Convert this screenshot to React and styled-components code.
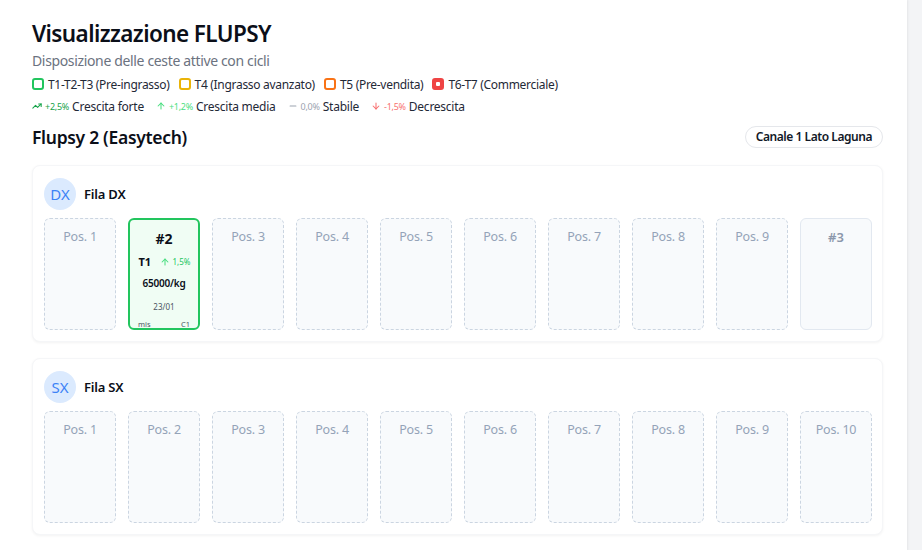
import styled, { createGlobalStyle } from 'styled-components'
import { TrendingUp, ArrowUp, ArrowDown, Minus } from 'lucide-react'

const Global = createGlobalStyle`
    body {
        margin: 0;
        background: #f3f4f6;
        font-family: "Noto Sans", "Open Sans", sans-serif;
        color: #111827;
    }
`

const legend = [
    { label: 'T1-T2-T3 (Pre-ingrasso)', color: '#22c55e' },
    { label: 'T4 (Ingrasso avanzato)', color: '#eab308' },
    { label: 'T5 (Pre-vendita)', color: '#f97316' },
    { label: 'T6-T7 (Commerciale)', color: '#ef4444', filled: true },
]

const trends = [
    { Icon: TrendingUp, value: '+2,5%', label: 'Crescita forte', color: '#16a34a' },
    { Icon: ArrowUp, value: '+1,2%', label: 'Crescita media', color: '#4ade80' },
    { Icon: Minus, value: '0,0%', label: 'Stabile', color: '#9ca3af' },
    { Icon: ArrowDown, value: '-1,5%', label: 'Decrescita', color: '#f87171' },
]

const dxSlots = [
    { pos: 1 },
    { pos: 2, basket: { num: 2, size: 'T1', trend: '1,5%', density: '65000/kg', date: '23/01', cycle: 'C1' } },
    { pos: 3 }, { pos: 4 }, { pos: 5 }, { pos: 6 }, { pos: 7 }, { pos: 8 }, { pos: 9 },
    { pos: 10, idle: 3 },
]
const sxSlots = Array.from({ length: 10 }, (_, i) => ({ pos: i + 1 }))

function Slot({ slot }) {
    if (slot.basket) {
        const b = slot.basket
        return (
            <ActiveCard>
                <CardNum>#{b.num}</CardNum>
                <SizeRow>
                    <SizeTag>{b.size}</SizeTag>
                    <Growth><ArrowUp size={10} strokeWidth={2.5} />{b.trend}</Growth>
                </SizeRow>
                <Density>{b.density}</Density>
                <DateText>{b.date}</DateText>
                <CardFoot><span>mis</span><span>{b.cycle}</span></CardFoot>
            </ActiveCard>
        )
    }
    if (slot.idle) {
        return <IdleCard><IdleNum>#{slot.idle}</IdleNum></IdleCard>
    }
    return <EmptyCard><PosLabel>Pos. {slot.pos}</PosLabel></EmptyCard>
}

function Row({ code, name, slots }) {
    return (
        <RowPanel>
            <RowHeader>
                <Avatar>{code}</Avatar>
                <RowName>{name}</RowName>
            </RowHeader>
            <SlotGrid>
                {slots.map(s => <Slot key={s.pos} slot={s} />)}
            </SlotGrid>
        </RowPanel>
    )
}

function App() {
    return (
        <>
            <Global />
            <Page>
                <Title>Visualizzazione FLUPSY</Title>
                <Subtitle>Disposizione delle ceste attive con cicli</Subtitle>
                <LegendRow>
                    {legend.map(l => (
                        <LegendItem key={l.label}>
                            <Swatch $color={l.color} $filled={l.filled} />
                            {l.label}
                        </LegendItem>
                    ))}
                </LegendRow>
                <TrendRow>
                    {trends.map(({ Icon, value, label, color }) => (
                        <TrendItem key={label}>
                            <Icon size={10} color={color} strokeWidth={2.5} />
                            <TrendValue $color={color}>{value}</TrendValue>
                            {label}
                        </TrendItem>
                    ))}
                </TrendRow>
                <FlupsyHeader>
                    <FlupsyName>Flupsy 2 (Easytech)</FlupsyName>
                    <ChannelPill>Canale 1 Lato Laguna</ChannelPill>
                </FlupsyHeader>
                <Rows>
                    <Row code="DX" name="Fila DX" slots={dxSlots} />
                    <Row code="SX" name="Fila SX" slots={sxSlots} />
                </Rows>
            </Page>
        </>
    )
}
export default App

const Page = styled.div`
    width: 907px;
    min-height: 550px;
    box-sizing: border-box;
    background: #ffffff;
    box-shadow: 1px 0 2px rgba(0, 0, 0, 0.06);
    padding: 18px 24px 16px 32px;
`
const Title = styled.h1`
    margin: 0;
    font-size: 22.5px;
    font-weight: 600;
    line-height: 32px;
    color: #0b0f19;
    letter-spacing: -0.6px;
`
const Subtitle = styled.p`
    margin: 1px 0 0;
    font-size: 14px;
    line-height: 20px;
    color: #6b7280;
    letter-spacing: -0.35px;
`
const LegendRow = styled.div`
    display: flex;
    gap: 9px;
    margin-top: 3px;
    height: 20px;
    align-items: center;
`
const LegendItem = styled.div`
    display: flex;
    align-items: center;
    gap: 4px;
    font-size: 12px;
    color: #1f2937;
    letter-spacing: -0.3px;
`
const Swatch = styled.span`
    position: relative;
    width: 8px;
    height: 8px;
    border: 2px solid ${p => p.$color};
    border-radius: 3px;
    background: ${p => (p.$filled ? p.$color : '#ffffff')};
    &::after {
        content: '';
        display: ${p => (p.$filled ? 'block' : 'none')};
        position: absolute;
        left: 2px;
        top: 2px;
        width: 4px;
        height: 4px;
        background: #ffffff;
        border-radius: 1px;
    }
`
const TrendRow = styled.div`
    display: flex;
    gap: 12px;
    height: 20px;
    margin-top: 2px;
    align-items: center;
`
const TrendItem = styled.div`
    display: flex;
    align-items: center;
    gap: 3px;
    font-size: 12px;
    color: #1f2937;
    letter-spacing: -0.25px;
`
const TrendValue = styled.span`
    font-size: 9px;
    color: ${p => p.$color};
`
const FlupsyHeader = styled.div`
    display: flex;
    justify-content: space-between;
    align-items: center;
    margin-top: 7px;
    width: 851px;
`
const FlupsyName = styled.h2`
    margin: 0;
    font-size: 17.5px;
    font-weight: 600;
    line-height: 28px;
    color: #0b0f19;
    letter-spacing: -0.3px;
`
const ChannelPill = styled.div`
    border: 1px solid #e5e7eb;
    border-radius: 999px;
    padding: 2px 10px;
    font-size: 12px;
    font-weight: 600;
    line-height: 16px;
    color: #111827;
    letter-spacing: -0.45px;
`
const Rows = styled.div`
    display: flex;
    flex-direction: column;
    gap: 16px;
    margin-top: 14px;
    width: 851px;
`
const RowPanel = styled.div`
    border: 1px solid #f5f6f8;
    border-radius: 8px;
    box-shadow: 0 1px 3px rgba(0, 0, 0, 0.05);
    padding: 12px 11px 11px 11px;
    background: #ffffff;
`
const RowHeader = styled.div`
    display: flex;
    align-items: center;
    gap: 8px;
    margin-bottom: 8px;
`
const Avatar = styled.div`
    width: 32px;
    height: 32px;
    border-radius: 50%;
    background: #dbeafe;
    color: #3b82f6;
    display: flex;
    align-items: center;
    justify-content: center;
    font-size: 15px;
`
const RowName = styled.span`
    font-size: 13px;
    font-weight: 600;
    color: #0b0f19;
    letter-spacing: -0.2px;
`
const SlotGrid = styled.div`
    display: grid;
    grid-template-columns: repeat(10, 72px);
    gap: 12px;
`
const CardBase = styled.div`
    box-sizing: border-box;
    height: 112px;
    border-radius: 6px;
    display: flex;
    flex-direction: column;
    align-items: center;
    overflow: hidden;
`
const EmptyCard = styled(CardBase)`
    border: 1px dashed #cbd5e1;
    background: #f8fafc;
    padding-top: 9px;
`
const PosLabel = styled.span`
    font-size: 12.5px;
    color: #94a3b8;
    letter-spacing: -0.2px;
`
const IdleCard = styled(CardBase)`
    border: 1px solid #e2e8f0;
    background: #f8fafc;
    padding-top: 9px;
`
const IdleNum = styled.span`
    font-size: 13px;
    font-weight: 600;
    color: #8b97ab;
`
const ActiveCard = styled(CardBase)`
    border: 2px solid #22c55e;
    background: #f0fdf4;
    padding: 9px 8px 0 8px;
`
const CardNum = styled.span`
    font-size: 14px;
    font-weight: 700;
    line-height: 20px;
    color: #0b0f19;
`
const SizeRow = styled.div`
    display: flex;
    align-items: center;
    justify-content: space-between;
    width: 100%;
    margin-top: 5px;
    padding-left: 1px;
`
const SizeTag = styled.span`
    font-size: 11px;
    font-weight: 700;
    color: #0b0f19;
`
const Growth = styled.span`
    display: flex;
    align-items: center;
    gap: 3px;
    font-size: 8px;
    color: #22c55e;
    svg { color: #4ade80; }
`
const Density = styled.span`
    font-size: 10px;
    font-weight: 600;
    margin-top: 7px;
    color: #0b0f19;
    letter-spacing: -0.2px;
`
const DateText = styled.span`
    font-size: 8px;
    color: #4b5563;
    margin-top: 11px;
`
const CardFoot = styled.div`
    display: flex;
    justify-content: space-between;
    width: 100%;
    font-size: 7.5px;
    line-height: 10px;
    color: #4b5563;
    margin-top: 7px;
`
